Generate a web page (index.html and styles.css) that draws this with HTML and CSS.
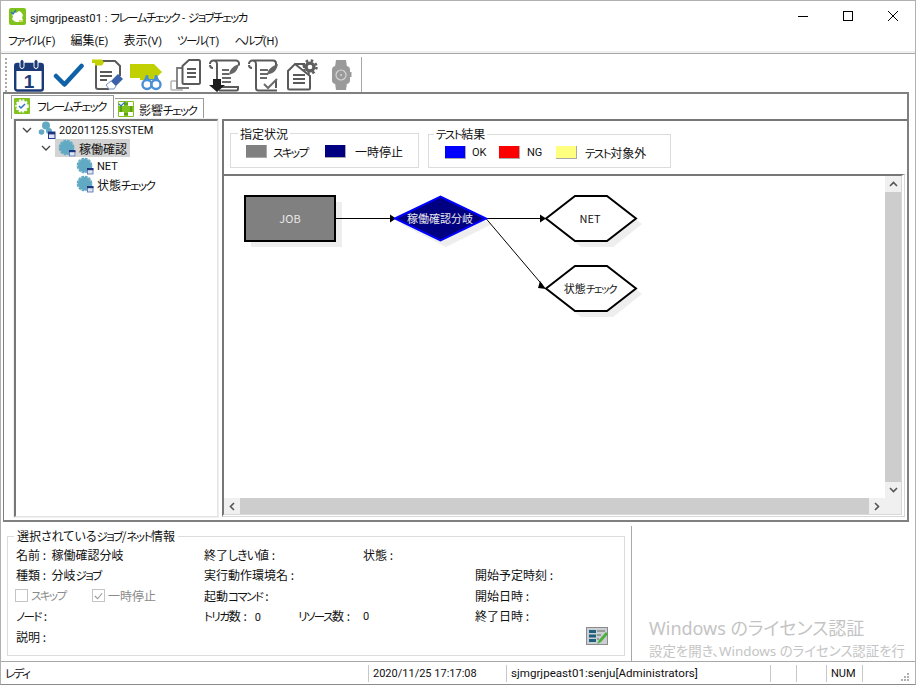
FILE: index.html
```html
<!DOCTYPE html>
<html lang="ja">
<head>
<meta charset="utf-8">
<title>フレームチェック - ジョブチェッカ</title>
<link rel="stylesheet" href="styles.css">
</head>
<body>
<svg class="defs" width="0" height="0" aria-hidden="true">
  <defs>
    <symbol id="job" viewBox="0 0 18 18">
      <circle cx="8.500" cy="8.500" r="6.800" fill="#62a9c4"/>
      <circle cx="8.500" cy="8.500" r="7.200" fill="none" stroke="#62a9c4" stroke-width="1.300" stroke-dasharray="2.800 1"/>
      <rect x="11" y="11" width="6.500" height="6.500" fill="#fff"/>
      <rect x="11.500" y="12.500" width="5.500" height="4.500" fill="#dfe6f2" stroke="#4a6aa8" stroke-width=".8"/>
      <rect x="11" y="11" width="6.500" height="2.200" fill="#1f3580"/>
    </symbol>
  </defs>
</svg>
<div class="window">
  <header class="titlebar">
    <svg class="appicon" viewBox="0 0 17 17">
      <rect width="17" height="17" rx="2" fill="#7fc31c"/>
      <path d="M3 6l2-2 2 1 3-2 2 1 2 3-1 3 1 2-3 2H7l-2-1-2-2 1-2z" fill="#fff"/>
      <path d="M2 4l2 2 3-4" fill="none" stroke="#2f74c0" stroke-width="1.300"/>
      <rect x="10" y="12" width="4" height="2" fill="#d5dd66"/>
    </svg>
    <span class="title"><span class="en tt">sjmgrjpeast01 : </span><span class="k">フレームチェック</span><span class="en tt"> - </span><span class="k">ジョブチェッカ</span></span>
    <div class="controls">
      <span class="ctrl"><svg width="12" height="12" viewBox="0 0 12 12"><path d="M1 6.500h10" stroke="#000"/></svg></span>
      <span class="ctrl"><svg width="12" height="12" viewBox="0 0 12 12"><rect x="1.500" y="1.500" width="9" height="9" fill="none" stroke="#000"/></svg></span>
      <span class="ctrl"><svg width="12" height="12" viewBox="0 0 12 12"><path d="M1 1l10 10M11 1L1 11" stroke="#000"/></svg></span>
    </div>
  </header>
  <nav class="menubar">
    <span><span class="k">ファイル</span><span class="en">(F)</span></span>
    <span>編集<span class="en">(E)</span></span>
    <span>表示<span class="en">(V)</span></span>
    <span><span class="k">ツール</span><span class="en">(T)</span></span>
    <span><span class="k">ヘルプ</span><span class="en">(H)</span></span>
  </nav>
  <div class="toolbar">
    <span class="grip"></span>
    <svg class="tool" viewBox="0 0 32 34">
      <rect x="2.200" y="6" width="27.600" height="26.500" rx="2" fill="#fff" stroke="#1c3a78" stroke-width="2.400"/>
      <rect x="2" y="6" width="28" height="7" fill="#1c3a78"/>
      <rect x="7" y="1.500" width="4" height="9" rx="2" fill="#1c3a78" stroke="#fff"/>
      <rect x="21" y="1.500" width="4" height="9" rx="2" fill="#1c3a78" stroke="#fff"/>
      <text x="16" y="30" class="calnum">1</text>
    </svg>
    <svg class="tool" viewBox="0 0 32 34">
      <path d="M4 18l8.500 8.500L29.500 8" fill="none" stroke="#0f62a8" stroke-width="4.500" stroke-linecap="round" stroke-linejoin="round"/>
    </svg>
    <svg class="tool" viewBox="0 0 32 34">
      <path d="M5 3h19l5 5v10M5 3v26a2 2 0 0 0 2 2h11" fill="none" stroke="#5a5a5a" stroke-width="2"/>
      <path d="M1 1.500h10l2 3-2 3H4V5H1z" fill="#c3d100"/>
      <path d="M9 14h12M9 18h12M9 22h7" stroke="#5a5a5a" stroke-width="2"/>
      <path d="M20 23l7-7 5 5-7 7z" fill="#3b62a8"/>
      <path d="M20 23l-5 4 3 4h5l2-3z" fill="#fff" stroke="#6f8fc4"/>
    </svg>
    <svg class="tool" viewBox="0 0 32 34">
      <path d="M0 6h24l8 8-8 8H10v-2H0z" fill="#c0d000"/>
      <circle cx="17" cy="26.500" r="4.500" fill="#fff" stroke="#4a90d4" stroke-width="2.400"/>
      <circle cx="26" cy="26.500" r="4.500" fill="#fff" stroke="#4a90d4" stroke-width="2.400"/>
      <path d="M14 22l2-5h2l1 4h5l1-4h2l2 5z" fill="#4a90d4"/>
    </svg>
    <svg class="tool" viewBox="0 0 32 34">
      <path d="M9 23H3a1 1 0 0 0-1 1v7a1 1 0 0 0 1 1h10v-3" fill="#fff" stroke="#b4b4b4" stroke-width="1.500"/>
      <path d="M13 10H8v20h12" fill="#fff" stroke="#7a7a7a" stroke-width="1.800"/>
      <path d="M20 2h10a1.500 1.500 0 0 1 1 1.500V25a1.500 1.500 0 0 1-1 1H15a1.500 1.500 0 0 1-1.500-1.500V8z" fill="#fff" stroke="#5a5a5a" stroke-width="2"/>
      <path d="M18 11h9M18 15h9M18 19h9" stroke="#5a5a5a" stroke-width="2"/>
    </svg>
    <svg class="tool" viewBox="0 0 32 34">
      <path d="M2 6a3.500 3.500 0 0 1 3.500-3.500H28a3 3 0 0 1 3 3v2M5.500 2.500A3.500 3.500 0 0 1 9 6v22M9 29h21v2a1.500 1.500 0 0 1-1.500 1.500H11" fill="none" stroke="#5a5a5a" stroke-width="2"/>
      <path d="M2 7a3 3 0 0 0 3 3" fill="none" stroke="#5a5a5a" stroke-width="2"/>
      <path d="M14 12h7M14 16h7M14 20h9M14 24h9" stroke="#6a6a6a" stroke-width="1.800"/>
      <path d="M21 17c1-7 5-9 10-11-1 5-3 9-8 10z" fill="#666"/>
      <path d="M5 21h8v6h4l-8 7-8-7h4z" fill="#1e1e1e"/>
    </svg>
    <svg class="tool" viewBox="0 0 32 34">
      <path d="M2 6a3.500 3.500 0 0 1 3.500-3.500H26a3 3 0 0 1 3 3v4M5.500 2.500A3.500 3.500 0 0 1 9 6v24a2.500 2.500 0 0 0 2.500 2.500H30M29 22v8" fill="none" stroke="#5a5a5a" stroke-width="2"/>
      <path d="M2 7a3 3 0 0 0 3 3" fill="none" stroke="#5a5a5a" stroke-width="2"/>
      <path d="M13 12h8M13 16h8M13 20h7" stroke="#6a6a6a" stroke-width="1.800"/>
      <path d="M20 17c1-7 6-9 11-11-1 5-3 9-9 10z" fill="#666"/>
      <path d="M17 26l4 4 9-9" fill="none" stroke="#6a6a6a" stroke-width="2"/>
    </svg>
    <svg class="tool" viewBox="0 0 32 34">
      <path d="M9 6h9v4M24 18v12a1.500 1.500 0 0 1-1.500 1.500H3.500A1.500 1.500 0 0 1 2 30V13l7-7z" fill="#fff" stroke="#5a5a5a" stroke-width="2"/>
      <path d="M7 17h12M7 21h12M7 25h12" stroke="#5a5a5a" stroke-width="2"/>
      <circle cx="24" cy="9" r="5.500" fill="#5e5e5e"/>
      <circle cx="24" cy="9" r="6.500" fill="none" stroke="#5e5e5e" stroke-width="2.400" stroke-dasharray="2.500 2.600"/>
      <circle cx="24" cy="9" r="2.300" fill="#fff"/>
    </svg>
    <svg class="tool" viewBox="0 0 32 34">
      <path d="M10 9l1-7h10l1 7zM10 25l1 7h10l1-7z" fill="#9a9a9a"/>
      <rect x="7" y="8" width="18" height="18" rx="4" fill="#9a9a9a"/>
      <rect x="25" y="14" width="1.500" height="5" fill="#9a9a9a"/>
      <circle cx="16" cy="17" r="5" fill="none" stroke="#d4d4d4" stroke-width="1.200"/>
      <circle cx="16" cy="17" r="1" fill="#d4d4d4"/>
    </svg>
    <span class="toolsep"></span>
  </div>

  <main class="pane">
    <div class="tabs">
      <div class="tab tab-active">
        <svg class="tabicon" viewBox="0 0 16 16">
          <rect width="16" height="16" rx="1" fill="#7fc31c"/>
          <circle cx="8" cy="8" r="5.500" fill="#fff"/>
          <circle cx="8" cy="8" r="6" fill="none" stroke="#fff" stroke-width="1.500" stroke-dasharray="2 1.500"/>
          <path d="M5 8l2 2 4-4" fill="none" stroke="#2f74c0" stroke-width="1.500"/>
        </svg>
        <span class="k">フレームチェック</span>
      </div>
      <div class="tab">
        <svg class="tabicon" viewBox="0 0 16 16">
          <rect width="16" height="16" rx="1" fill="#7fc31c"/>
          <rect x="1" y="1" width="5" height="4" fill="#fff"/>
          <rect x="10" y="1" width="5" height="4" fill="#fff"/>
          <rect x="1" y="11" width="5" height="4" fill="#fff"/>
          <rect x="10" y="11" width="5" height="4" fill="#fff"/>
          <path d="M3 5v6M13 5v6M6 3h4M6 13h4" stroke="#3d7a10"/>
          <path d="M1 3l2 2 4-4" fill="none" stroke="#2f74c0" stroke-width="1.200"/>
        </svg>
        <span>影響<span class="k">チェック</span></span>
      </div>
    </div>
    <div class="split">
      <aside class="tree">
        <div class="node lvl0">
          <svg class="chev" viewBox="0 0 10 10"><path d="M1 3l4 4 4-4" fill="none" stroke="#444" stroke-width="1.300"/></svg>
          <svg class="nodeicon sysicon" viewBox="0 0 18 18">
            <circle cx="8" cy="4.500" r="4" fill="#62a9c4"/>
            <circle cx="3.500" cy="11" r="2.800" fill="#62a9c4"/>
            <circle cx="11" cy="10" r="3" fill="#62a9c4"/>
            <rect x="10.500" y="11" width="6.500" height="6.500" fill="#dfe6f2" stroke="#27408b"/>
            <rect x="10" y="11" width="7" height="2.400" fill="#1f3580"/>
          </svg>
          <span class="label en">20201125.SYSTEM</span>
        </div>
        <div class="node lvl1">
          <svg class="chev" viewBox="0 0 10 10"><path d="M1 3l4 4 4-4" fill="none" stroke="#444" stroke-width="1.300"/></svg>
          <div class="selected">
            <svg class="nodeicon"><use href="#job"/></svg>
            <span class="label">稼働確認</span>
          </div>
        </div>
        <div class="node lvl2">
          <svg class="nodeicon"><use href="#job"/></svg>
          <span class="label en">NET</span>
        </div>
        <div class="node lvl2">
          <svg class="nodeicon"><use href="#job"/></svg>
          <span class="label">状態<span class="k">チェック</span></span>
        </div>
      </aside>
      <section class="right">
        <div class="legends">
          <fieldset class="legend-box box-a">
            <legend>指定状況</legend>
            <span class="swatch sw-gray"></span><span class="swlabel lab-skip k">スキップ</span>
            <span class="swatch sw-navy"></span><span class="swlabel lab-hold">一時停止</span>
          </fieldset>
          <fieldset class="legend-box box-b">
            <legend><span class="k">テスト</span>結果</legend>
            <span class="swatch sw-blue"></span><span class="swlabel lab-ok en">OK</span>
            <span class="swatch sw-red"></span><span class="swlabel lab-ng en">NG</span>
            <span class="swatch sw-yellow"></span><span class="swlabel lab-ex"><span class="k">テスト</span>対象外</span>
          </fieldset>
        </div>
        <div class="canvas-frame">
          <div class="canvas">
            <svg class="flow" width="661" height="322" viewBox="224 176 661 322">
              <rect x="251" y="202" width="91" height="45" fill="#eeeeee"/>
              <path d="M401 224l45-22 46 22-46 23z" fill="#eeeeee"/>
              <path d="M552 224l29-22h32l29 22-29 23h-32z" fill="#eeeeee"/>
              <path d="M552 294l29-22h32l29 22-29 23h-32z" fill="#eeeeee"/>
              <rect x="245" y="196" width="90" height="45" fill="#808080" stroke="#000" stroke-width="2"/>
              <text x="290" y="223" class="nodetext light">JOB</text>
              <path d="M336 218.500h55M486 218.500h56" stroke="#000" fill="none"/>
              <path d="M486 218.500l56 66" stroke="#000" fill="none"/>
              <path d="M390 214.500l6 4-6 4zM540 214.500l6 4-6 4z" fill="#000"/>
              <path d="M540 281l6 8-8-1z" fill="#000"/>
              <path d="M395 218.500l45.500-22 45.500 22-45.500 22z" fill="#000080" stroke="#0000ff" stroke-width="2"/>
              <text x="440" y="223" class="nodetext light">稼働確認分岐</text>
              <path d="M546 218.500l29-22.500h32l29 22.500-29 22.500h-32z" fill="#fff" stroke="#000" stroke-width="2"/>
              <text x="590" y="223" class="nodetext">NET</text>
              <path d="M546 288.500l29-22.500h32l29 22.500-29 22.500h-32z" fill="#fff" stroke="#000" stroke-width="2"/>
              <text x="590" y="293" class="nodetext">状態<tspan class="kn">チェック</tspan></text>
            </svg>
          </div>
          <div class="vscroll">
            <span class="arrow"><svg width="9" height="6" viewBox="0 0 9 6"><path d="M1 5l3.500-3.500L8 5" fill="none" stroke="#555" stroke-width="1.600"/></svg></span>
            <span class="vthumb"></span>
            <span class="arrow"><svg width="9" height="6" viewBox="0 0 9 6"><path d="M1 1l3.500 3.500L8 1" fill="none" stroke="#555" stroke-width="1.600"/></svg></span>
          </div>
          <div class="hscroll">
            <span class="arrow"><svg width="6" height="9" viewBox="0 0 6 9"><path d="M5 1L1.500 4.500 5 8" fill="none" stroke="#555" stroke-width="1.600"/></svg></span>
            <span class="hthumb"></span>
            <span class="arrow"><svg width="6" height="9" viewBox="0 0 6 9"><path d="M1 1l3.500 3.500L1 8" fill="none" stroke="#555" stroke-width="1.600"/></svg></span>
          </div>
          <div class="corner"></div>
        </div>
      </section>
    </div>
  </main>

  <section class="bottom">
    <fieldset class="info">
      <legend>選択されている<span class="k">ジョブ</span>/<span class="k">ネット</span>情報</legend>
      <div class="grid">
        <span>名前 :&nbsp; 稼働確認分岐</span>
        <span class="span2">終了<span class="hira">しきい</span>値 :</span>
        <span class="span2">状態 :</span>

        <span>種類 :&nbsp; 分岐<span class="k">ジョブ</span></span>
        <span class="span3">実行動作環境名 :</span>
        <span>開始予定時刻 :</span>

        <div class="checks">
          <span class="check"><span class="box"></span><span class="k">スキップ</span></span>
          <span class="check"><span class="box"><svg width="12" height="12" viewBox="0 0 12 12"><path d="M2 6l3 3 5-6" fill="none" stroke="#999" stroke-width="1.200"/></svg></span>一時停止</span>
        </div>
        <span class="span3">起動<span class="k">コマンド</span> :</span>
        <span>開始日時 :</span>

        <span><span class="k">ノード</span> :</span>
        <span><span class="k">トリガ</span>数 :&nbsp;&nbsp; <span class="en">0</span></span>
        <span><span class="k">リソース</span>数 :</span>
        <span class="en zero">0</span>
        <span>終了日時 :</span>

        <span class="span4">説明 :</span>
        <span class="editcell">
          <svg class="editicon" viewBox="0 0 22 18">
            <rect width="22" height="18" fill="#8b8b8b"/>
            <rect x="1" y="1" width="20" height="16" fill="#c9cfd2"/>
            <rect x="3" y="3" width="7" height="3" fill="#1f5f7f"/>
            <rect x="3" y="7.500" width="7" height="3" fill="#1f5f7f"/>
            <rect x="3" y="12" width="7" height="3" fill="#1f5f7f"/>
            <path d="M11 4h8M11 8h4M11 12h2" stroke="#666"/>
            <path d="M11 17l2-4 7-8 2 2-7 8z" fill="#4caf3a"/>
          </svg>
        </span>
      </div>
    </fieldset>
    <div class="blank"></div>
  </section>

  <footer class="statusbar">
    <span class="cell c1"><span class="k">レディ</span></span>
    <span class="cell c2 en">2020/11/25 17:17:08</span>
    <span class="cell c3 en">sjmgrjpeast01:senju[Administrators]</span>
    <span class="cell c4"></span>
    <span class="cell c5"></span>
    <span class="cell c6 en">NUM</span>
    <span class="cell c7">
      <svg class="sizegrip" width="11" height="11" viewBox="0 0 11 11">
        <path d="M8 2h2v2H8zM5 5h2v2H5zM8 5h2v2H8zM2 8h2v2H2zM5 8h2v2H5zM8 8h2v2H8z" fill="#b0b0b0"/>
      </svg>
    </span>
  </footer>
  <div class="watermark">
    <div class="wm1">Windows のライセンス認証</div>
    <div class="wm2">設定を開き、Windows のライセンス認証を行</div>
  </div>
</div>
</body>
</html>
```
FILE: styles.css
```css
* { box-sizing: border-box; }
html, body { margin: 0; padding: 0; background: #fff; }
body {
  width: 916px;
  height: 685px;
  overflow: hidden;
  font-family: "Noto Sans CJK JP", sans-serif;
  font-size: 12px;
  font-feature-settings: "palt";
  color: #111;
}
.en { font-family: Roboto, sans-serif; font-size: 11px; }
.tt { font-size: 11.300px; white-space: pre; }
.k { font-size: 11.500px; letter-spacing: -1.500px; }
.hira { letter-spacing: -1px; }
.zero { padding-top: 2px; }
.defs { position: absolute; }
.window {
  position: relative;
  width: 916px;
  height: 685px;
  border: 1px solid #b0b0b0;
  border-bottom-color: #8a8a8a;
  display: flex;
  flex-direction: column;
  overflow: hidden;
  background: #fff;
}
.titlebar {
  height: 29px;
  display: flex;
  align-items: center;
  padding-left: 8px;
  padding-top: 1px;
  flex: none;
}
.appicon { width: 17px; height: 17px; flex: none; }
.title { margin-left: 4px; white-space: nowrap; }
.controls { margin-left: auto; display: flex; }
.ctrl { width: 45px; height: 29px; display: flex; align-items: center; justify-content: center; }
.menubar {
  height: 23px;
  display: flex;
  align-items: center;
  gap: 15px;
  padding-left: 7px;
  padding-bottom: 2px;
  flex: none;
  border-bottom: 2px solid #f0f0f0;
}
.toolbar {
  height: 39px;
  flex: none;
  display: flex;
  align-items: center;
  gap: 7px;
  padding: 3px 0 0 4px;
  border-top: 1px solid #a8a8a8;
}
.grip {
  width: 2px;
  height: 34px;
  margin-right: -1px;
  background: repeating-linear-gradient(to bottom, #a8a8a8 0 2px, transparent 2px 4px);
}
.tool { width: 32px; height: 34px; flex: none; }
.calnum { font: bold 19px "Liberation Sans", sans-serif; fill: #1c3a78; text-anchor: middle; }
.toolsep { width: 1px; height: 36px; background: #a8a8a8; margin-left: -3px; }
.pane {
  height: 430px;
  flex: none;
  margin-left: 2px;
  width: 906px;
  border: 1px solid #808080;
  border-width: 2px 2px 2px 1px;
  display: flex;
  flex-direction: column;
  position: relative;
}
.tabs {
  height: 25px;
  flex: none;
  display: flex;
  align-items: flex-end;
  padding-left: 7px;
  gap: 1px;
}
.tab {
  height: 21px;
  display: flex;
  align-items: center;
  gap: 5px;
  padding: 0 0 0 3px;
  width: 89px;
  border: 1px solid #9a9a9a;
  border-bottom: 0;
  border-left: 0;
  white-space: nowrap;
}
.tab-active {
  height: 24px;
  width: 103px;
  gap: 7px;
  padding-left: 2px;
  padding-bottom: 3px;
  border-left: 1px solid #9a9a9a;
}
.tabicon { width: 16px; height: 16px; flex: none; }
.split { flex: 1; display: flex; min-height: 0; }
.tree {
  width: 204px;
  margin-left: 10px;
  margin-bottom: 3px;
  flex: none;
  border: 2px solid #777;
  border-right: 1px solid #e4e4e4;
  border-bottom: 1px solid #e4e4e4;
  outline: 1px solid #f0f0f0;
}
.node { height: 18px; display: flex; align-items: center; white-space: nowrap; }
.lvl0 { padding-left: 6px; }
.lvl1 { padding-left: 25px; }
.lvl2 { padding-left: 60px; }
.chev { width: 10px; height: 10px; flex: none; }
.nodeicon { width: 18px; height: 18px; flex: none; }
.label { margin-left: 3px; }
.lvl0 .sysicon { margin-left: 6px; }
.lvl2 .label { margin-left: 3px; }
.selected {
  display: flex;
  align-items: center;
  height: 18px;
  width: 75px;
  margin-left: 4px;
  padding-left: 3px;
  background: #d3d3d3;
}
.right { flex: none; width: 683px; margin-left: 4px; display: flex; flex-direction: column; }
.legends {
  height: 55px;
  flex: none;
  display: flex;
  gap: 9px;
  padding-left: 6px;
  padding-top: 6px;
  border-top: 2px solid #777;
  border-left: 2px solid #777;
  margin-right: -2px;
}
.legend-box {
  margin: 0;
  height: 41px;
  border: 1px solid #dcdcdc;
  display: flex;
  align-items: center;
  padding: 0 0 4px 15px;
  min-width: 0;
}
.legend-box legend { padding: 0 2px; margin-left: -8px; line-height: 13px; }
.box-a { width: 189px; }
.box-b { width: 243px; padding-left: 16px; }
.box-b legend { margin-left: -11px; }
.swatch {
  flex: none;
  width: 21px;
  height: 13px;
  border-bottom: 1px solid #aaa;
  border-right: 1px solid #aaa;
}
.swlabel { margin-left: 6px; flex: none; }
.lab-skip { width: 52px; }
.lab-hold { margin-left: 9px; }
.lab-ok { margin-left: 6px; width: 27px; }
.lab-ng { margin-left: 7px; width: 29px; }
.lab-ex { margin-left: 8px; }
.sw-gray { background: #808080; }
.sw-navy { background: #000080; }
.sw-blue { background: #0000ff; }
.sw-red { background: #ff0000; }
.sw-yellow { background: #ffff80; }
.canvas-frame {
  flex: 1;
  min-height: 0;
  display: grid;
  grid-template-columns: 1fr 16px;
  grid-template-rows: 1fr 16px;
  margin-bottom: 3px;
  border-top: 2px solid #777;
  border-left: 2px solid #777;
  border-right: 4px double #d8d8d8;
  border-bottom: 3px double #d8d8d8;
}
.canvas { overflow: hidden; background: #fff; }
.flow { display: block; }
.nodetext { font-size: 11px; text-anchor: middle; fill: #111; }
.kn { letter-spacing: -1.400px; font-size: 10.500px; }
.light { fill: #e8e8e8; }
.vscroll, .hscroll { background: #f0f0f0; display: flex; }
.vscroll { flex-direction: column; }
.arrow { flex: none; width: 16px; height: 16px; display: flex; align-items: center; justify-content: center; }
.vthumb { flex: 1; background: #cdcdcd; }
.hthumb { flex: 1; background: #cdcdcd; }
.corner { background: #f0f0f0; }
.bottom {
  height: 139px;
  flex: none;
  display: flex;
  padding: 4px 0 0 6px;
}
.info {
  margin: 3px 0 5px;
  width: 618px;
  border: 1px solid #dcdcdc;
  padding: 1px 0 0 8px;
  min-width: 0;
}
.info legend { margin-left: -2px; padding: 0 3px; line-height: 14px; }
.grid {
  display: grid;
  grid-template-columns: 188px 94px 65px 112px 1fr;
  grid-auto-rows: 20.500px;
  align-items: center;
  white-space: nowrap;
}
.span2 { grid-column: span 2; }
.span3 { grid-column: span 3; }
.span4 { grid-column: span 4; }
.checks { display: flex; color: #8a8a8a; }
.check { display: flex; align-items: center; gap: 3px; width: 78px; margin-left: -1px; }
.box { width: 13px; height: 13px; border: 1px solid #c4c4c4; display: flex; background: #fff; }
.editcell { display: flex; justify-content: flex-end; padding-right: 16px; }
.editicon { width: 22px; height: 18px; }
.blank { margin-left: 6px; width: 1px; height: 100%; background: #a8a8a8; }
.statusbar {
  flex: 1;
  display: flex;
  align-items: center;
  border-top: 1px solid #a8a8a8;
  white-space: nowrap;
}
.cell { height: 17px; display: flex; align-items: center; padding-left: 4px; border-right: 1px solid #c8c8c8; flex: none; }
.c1 { width: 368px; }
.c2 { width: 138px; }
.c3 { width: 264px; font-size: 11.600px; }
.c4 { width: 26px; }
.c5 { width: 30px; }
.c6 { width: 36px; }
.c7 { border-right: 0; width: 50px; justify-content: flex-end; padding-right: 3px; }
.sizegrip { align-self: flex-end; }
.watermark {
  position: absolute;
  left: 648px;
  top: 614px;
  width: 266px;
  color: #c4c4c4;
  white-space: nowrap;
  pointer-events: none;
  font-family: "Noto Sans", "Noto Sans CJK JP", sans-serif;
}
.wm1 { font-size: 18px; line-height: 26px; }
.wm2 { font-size: 13.400px; line-height: 20px; }
```
